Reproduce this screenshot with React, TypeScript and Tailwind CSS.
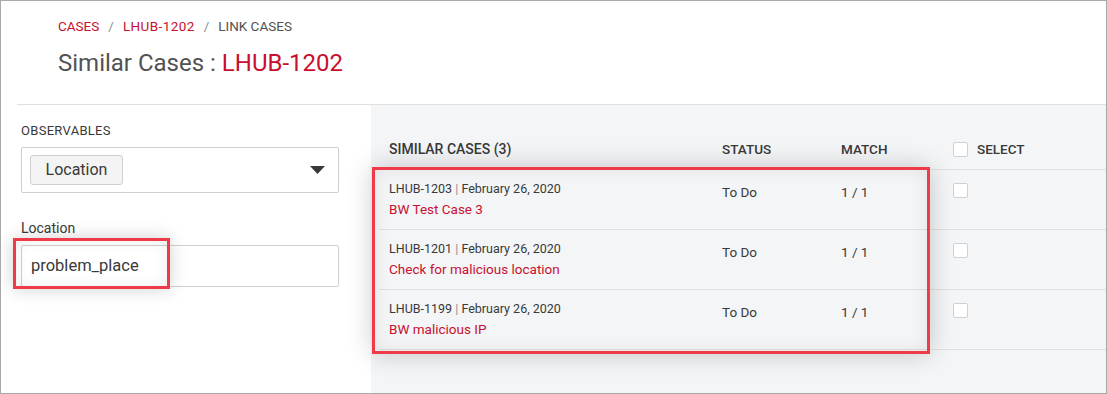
import React from "react";

const rows = [
  { id: "LHUB-1203", date: "February 26, 2020", title: "BW Test Case 3" },
  { id: "LHUB-1201", date: "February 26, 2020", title: "Check for malicious location" },
  { id: "LHUB-1199", date: "February 26, 2020", title: "BW malicious IP" },
];

function Box() {
  return <div className="w-[15px] h-[15px] bg-white border border-[#d0d0d0] rounded-[2px]" />;
}

export default function App() {
  return (
    <div
      className="relative w-[1107px] h-[394px] border border-[#a9a9a9] bg-white overflow-hidden flex flex-col text-[#393939]"
      style={{ fontFamily: "Roboto, 'Noto Sans', sans-serif" }}
    >
      <div className="h-[103px] pl-[57px] pt-[16px] shrink-0">
        <div className="text-[13.5px] leading-[18px] flex gap-[9px]">
          <span className="text-[#c8102e]">CASES</span>
          <span className="text-[#8d8d8d]">/</span>
          <span className="text-[#c8102e] tracking-[0.4px]">LHUB-1202</span>
          <span className="text-[#8d8d8d]">/</span>
          <span className="text-[#525252]">LINK CASES</span>
        </div>
        <div className="mt-[13px] text-[24px] leading-[30px] text-[#525252]">
          Similar Cases : <span className="text-[#c8102e]">LHUB-1202</span>
        </div>
      </div>
      <div className="flex flex-1 ml-[16px] border-t border-[#e0e0e0]">
        <div className="w-[354px] pl-[4px] pr-[32px] pt-[18px] bg-white">
          <div className="text-[13px] leading-[16px] tracking-[0.3px] text-[#393939]">OBSERVABLES</div>
          <div className="mt-[8px] h-[46px] border border-[#cfcfcf] rounded-[2px] flex items-center justify-between pl-[8px] pr-[13px]">
            <div className="h-[30px] w-[93px] bg-[#f4f4f4] border border-[#cfcfcf] rounded-[3px] flex items-center justify-center text-[16px] text-[#393939]">
              Location
            </div>
            <svg width="15" height="8" viewBox="0 0 15 8">
              <path d="M0 0 L15 0 L7.5 8 Z" fill="#393939" />
            </svg>
          </div>
          <div className="mt-[27px] text-[14px] leading-[17px] text-[#393939]">Location</div>
          <div className="mt-[8px] h-[42px] border border-[#cfcfcf] rounded-[2px] flex items-center pl-[9px] text-[16.5px] text-[#393939]">
            problem_place
          </div>
        </div>
        <div className="flex-1 bg-[#f4f5f7] pl-[8px]">
          <div className="h-[65px] flex items-end pb-[11px] border-b border-[#e0e0e0] text-[13.5px] leading-[17px] font-medium text-[#393939]">
            <div className="w-[343px] pl-[10px] text-[14px]">SIMILAR CASES (3)</div>
            <div className="w-[119px]">STATUS</div>
            <div className="w-[112px]">MATCH</div>
            <div className="flex items-center gap-[9px]">
              <Box />
              <span>SELECT</span>
            </div>
          </div>
          {rows.map((r) => (
            <div key={r.id} className="h-[60px] flex border-b border-[#e0e0e0]">
              <div className="w-[343px] pl-[10px] pt-[9px]">
                <div className="text-[12.5px] leading-[20px] text-[#393939]">
                  {r.id} <span className="text-[#8d8d8d]">|</span> {r.date}
                </div>
                <div className="text-[13.5px] leading-[21px] text-[#c8102e]">{r.title}</div>
              </div>
              <div className="w-[119px] pt-[12px] text-[13.5px] leading-[20px]">To Do</div>
              <div className="w-[112px] pt-[12px] text-[13.5px] leading-[20px]">1 / 1</div>
              <div className="pt-[13px]">
                <Box />
              </div>
            </div>
          ))}
        </div>
      </div>
      <div
        className="absolute left-[12px] top-[237px] w-[157px] h-[51px] border-[3px] border-[#ef3a4a]"
        style={{ boxShadow: "0 0 18px rgba(0,0,0,0.18), inset 0 0 14px rgba(0,0,0,0.08)" }}
      />
      <div
        className="absolute left-[371px] top-[166px] w-[558px] h-[187px] border-[3px] border-[#ef3a4a]"
        style={{ boxShadow: "0 0 24px rgba(0,0,0,0.2), inset 0 0 18px rgba(0,0,0,0.08)" }}
      />
    </div>
  );
}
